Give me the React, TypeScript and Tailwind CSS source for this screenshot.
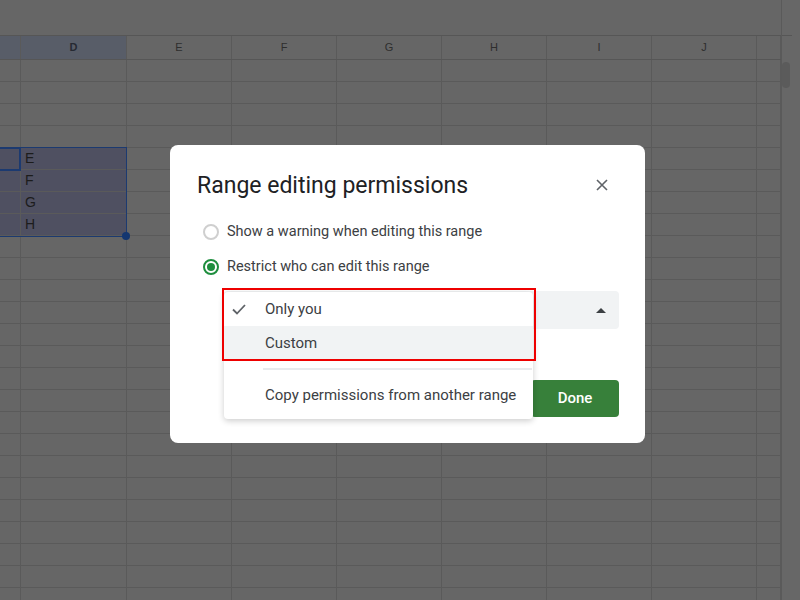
import React from 'react';

const COLS = [
  { w: 'w-[21px]', label: '' },
  { w: 'w-[106px]', label: 'D' },
  { w: 'w-[105px]', label: 'E' },
  { w: 'w-[105px]', label: 'F' },
  { w: 'w-[105px]', label: 'G' },
  { w: 'w-[105px]', label: 'H' },
  { w: 'w-[105px]', label: 'I' },
  { w: 'w-[105px]', label: 'J' },
  { w: 'w-[24px]', label: '' },
];

// rows 4..7 hold the selected block, column D carries the letters
const VALUES: Record<number, string> = { 4: 'E', 5: 'F', 6: 'G', 7: 'H' };
const ROW_COUNT = 25;

const Sheet: React.FC = () => {
  return (
    <div className="flex w-[800px] h-[600px] overflow-hidden bg-[#666666]">
      <div className="relative w-[781px]">
        {/* formula bar area */}
        <div className="h-[36px] border-b border-[#565656]" />

        {/* column headers */}
        <div className="flex h-[24px] border-b border-[#565656]">
          {COLS.map((c, i) => (
            <div
              key={i}
              className={`${c.w} shrink-0 h-full border-r border-[#5a5a5a] flex items-center justify-center text-[11px] ${
                i < 2 ? 'bg-[#585d68] font-bold text-[#262a33]' : 'text-[#2e2e2e]'
              }`}
            >
              {c.label}
            </div>
          ))}
        </div>

        {/* cells */}
        {Array.from({ length: ROW_COUNT }).map((_, r) => (
          <div key={r} className="flex h-[22px]">
            {COLS.map((c, i) => {
              const selected = r >= 4 && r <= 7 && i < 2;
              return (
                <div
                  key={i}
                  className={`${c.w} shrink-0 h-full border-r border-b border-[#5a5a5a] flex items-center pl-[4px] text-[14px] text-[#1c1c1c] ${
                    selected ? 'bg-[#4f5061]' : ''
                  }`}
                >
                  {i === 1 && VALUES[r]}
                </div>
              );
            })}
          </div>
        ))}

        {/* selection outline, active cell and fill handle */}
        <div className="absolute left-[-2px] top-[147px] w-[129px] h-[90px] border border-[#1c3a70] pointer-events-none" />
        <div className="absolute left-[-2px] top-[147px] w-[23px] h-[24px] border-2 border-[#1c3a70] pointer-events-none" />
        <div className="absolute left-[122px] top-[232px] w-[8px] h-[8px] rounded-full bg-[#143670]" />
      </div>

      {/* vertical scrollbar */}
      <div className="flex-1 border-l border-[#5a5a5a] bg-[#676767]">
        <div className="h-[36px] border-b border-[#565656] mr-[8px]" />
        <div className="mt-[26px] w-[8px] h-[26px] rounded-full bg-[#5b5b5b]" />
      </div>
    </div>
  );
};

const RangeDialog: React.FC = () => {
  return (
    <div
      className="absolute left-[170px] top-[145px] w-[475px] bg-white rounded-lg pt-[26px] pb-[26px] pl-[27px] pr-[26px]"
      style={{ fontFamily: 'Roboto, "Liberation Sans", sans-serif' }}
    >
      <div className="flex items-center justify-between h-[28px]">
        <h2 className="text-[23px] leading-[28px] text-[#202124] mt-[2px]">Range editing permissions</h2>
        <svg width="12" height="12" viewBox="0 0 12 12" className="mr-[11px]">
          <path d="M1 1 L11 11 M11 1 L1 11" stroke="#5f6368" strokeWidth="1.6" fill="none" />
        </svg>
      </div>

      <label className="flex items-center gap-[8px] h-[20px] mt-[23px] ml-[6px]">
        <span className="w-[16px] h-[16px] rounded-full border-2 border-[#cfcfcf]" />
        <span className="text-[14.5px] text-[#3c4043]">Show a warning when editing this range</span>
      </label>

      <label className="flex items-center gap-[8px] h-[20px] mt-[15px] ml-[6px]">
        <span className="w-[16px] h-[16px] rounded-full border-2 border-[#1e8e3e] flex items-center justify-center">
          <span className="w-[8px] h-[8px] rounded-full bg-[#1e8e3e]" />
        </span>
        <span className="text-[14.5px] text-[#3c4043]">Restrict who can edit this range</span>
      </label>

      <div className="relative mt-[14px]">
        <div className="ml-[27px] h-[38px] rounded bg-[#f1f3f4] flex items-center justify-end pr-[13px]">
          <svg width="10" height="5" viewBox="0 0 10 5">
            <path d="M0 5 L5 0 L10 5 Z" fill="#3c4043" />
          </svg>
        </div>

        <div className="flex justify-end mt-[51px]">
          <button className="w-[88px] h-[37px] rounded bg-[#37803a] text-white text-[15px] font-medium">
            Done
          </button>
        </div>

        {/* open dropdown menu */}
        <div className="absolute left-[27px] top-[1px] w-[309px] bg-white rounded shadow-[0_2px_6px_rgba(0,0,0,0.2)] pb-[7px] text-[15px] text-[#3c4043]">
          <div className="flex items-center h-[34px] pt-[1px]">
            <span className="w-[41px] flex justify-start pl-[8px]">
              <svg width="14" height="11" viewBox="0 0 14 11">
                <path d="M1 5.5 L5 9.5 L13 1" stroke="#5f6368" strokeWidth="1.8" fill="none" />
              </svg>
            </span>
            <span>Only you</span>
          </div>
          <div className="flex items-center h-[34px] bg-[#f1f3f4] pl-[41px]">Custom</div>
          <div className="ml-[39px] mr-[1px] my-[8px] h-[2px] bg-[#e8eaed]" />
          <div className="flex items-center h-[34px] pl-[41px]">Copy permissions from another range</div>
        </div>

        {/* highlight box round the two options */}
        <div className="absolute left-[25px] top-[-3px] w-[314px] h-[73px] border-2 border-[#ee0000] pointer-events-none" />
      </div>
    </div>
  );
};

const App: React.FC = () => {
  return (
    <div className="relative w-[800px] h-[600px]" style={{ fontFamily: '"Liberation Sans", Arial, sans-serif' }}>
      <Sheet />
      <RangeDialog />
    </div>
  );
};

export default App;
